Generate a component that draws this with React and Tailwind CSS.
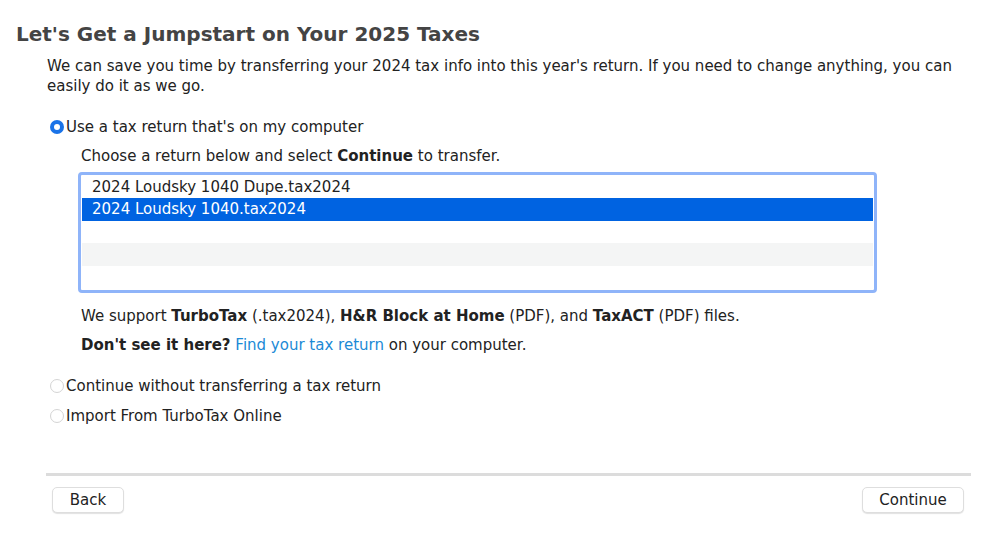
import React from "react";

function Radio({ checked }) {
  if (checked) {
    return (
      <span className="inline-flex w-[14px] h-[14px] rounded-full bg-[#1a73e8] items-center justify-center shrink-0">
        <span className="w-[6px] h-[6px] rounded-full bg-white" />
      </span>
    );
  }
  return <span className="inline-block w-[14px] h-[14px] rounded-full border border-[#d4d4d4] bg-white shrink-0" />;
}

export default function App() {
  return (
    <div className="w-[999px] h-[549px] bg-white text-[#222] overflow-hidden" style={{ fontFamily: '"DejaVu Sans", sans-serif' }}>
      <div className="pl-[16px] pt-[22px]">
        <h1 className="text-[20px] font-bold text-[#444] leading-[24px]">Let's Get a Jumpstart on Your 2025 Taxes</h1>
      </div>
      <div className="pl-[47px] pr-[40px] pt-[10px] text-[15px] leading-[20px]">
        <p>We can save you time by transferring your 2024 tax info into this year's return. If you need to change anything, you can easily do it as we go.</p>
      </div>
      <div className="pl-[50px] pt-[21px] text-[15px] leading-[20px]">
        <div className="flex items-center">
          <Radio checked />
          <span className="ml-[2px]">Use a tax return that's on my computer</span>
        </div>
        <div className="pl-[31px] pt-[9px]">
          Choose a return below and select <b>Continue</b> to transfer.
        </div>
        <div className="ml-[28px] mt-[6px] w-[799px] h-[121px] border-[3px] border-[#8fb4f9] rounded-[4px] p-[1px] bg-white">
          <div className="h-[22px] pl-[10px] leading-[22px] bg-white">2024 Loudsky 1040 Dupe.tax2024</div>
          <div className="h-[23px] pl-[10px] leading-[23px] bg-[#0063e1] text-white">2024 Loudsky 1040.tax2024</div>
          <div className="h-[22px] bg-white" />
          <div className="h-[23px] bg-[#f4f5f5]" />
          <div className="h-[22px] bg-white" />
        </div>
        <div className="pl-[31px] pt-[13px]">
          We support <b>TurboTax</b> (.tax2024), <b>H&amp;R Block at Home</b> (PDF), and <b>TaxACT</b> (PDF) files.
        </div>
        <div className="pl-[31px] pt-[9px]">
          <b>Don't see it here?</b> <span className="text-[#1b8ad6]">Find your tax return</span> on your computer.
        </div>
        <div className="flex items-center pt-[21px]">
          <Radio />
          <span className="ml-[2px]">Continue without transferring a tax return</span>
        </div>
        <div className="flex items-center pt-[10px]">
          <Radio />
          <span className="ml-[2px]">Import From TurboTax Online</span>
        </div>
      </div>
      <div className="ml-[46px] w-[925px] mt-[47px] h-[3px] bg-[#dcdcdc]" />
      <div className="flex justify-between pl-[52px] pr-[35px] pt-[11px]">
        <button className="w-[72px] h-[26px] rounded-[5px] bg-white border border-[#dedede] shadow-[0_1px_1px_rgba(0,0,0,0.12)] text-[15px] text-[#222]">Back</button>
        <button className="w-[102px] h-[26px] rounded-[5px] bg-white border border-[#dedede] shadow-[0_1px_1px_rgba(0,0,0,0.12)] text-[15px] text-[#222]">Continue</button>
      </div>
    </div>
  );
}
